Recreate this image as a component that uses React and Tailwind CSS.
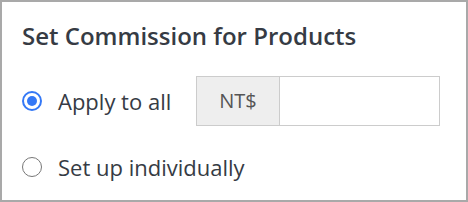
export default function App() {
  return (
    <div
      className="w-[468px] h-[202px] border-2 border-[#a9a9a9] bg-white text-[#363b44]"
      style={{ fontFamily: '"Open Sans", sans-serif' }}
    >
      <div className="pl-5 pt-[18px]">
        <h1 className="text-[24px] leading-[32px] font-semibold">Set Commission for Products</h1>

        <div className="mt-[24px] flex items-center h-[50px]">
          <label className="flex items-center w-[174px] shrink-0">
            <span className="w-5 h-5 rounded-full border-2 border-[#3478f6] flex items-center justify-center">
              <span className="w-[10px] h-[10px] rounded-full bg-[#3478f6]" />
            </span>
            <span className="ml-4 text-[22px]">Apply to all</span>
          </label>
          <div className="flex h-[50px] w-[244px] border border-[#cccccc]">
            <span className="w-[83px] shrink-0 bg-[#eeeeee] border-r border-[#cccccc] flex items-center justify-center text-[20px] text-[#555]">
              NT$
            </span>
            <input type="text" className="w-0 min-w-0 flex-1 px-3 outline-none bg-white" />
          </div>
        </div>

        <label className="mt-[25px] flex items-center h-[32px]">
          <span className="w-5 h-5 rounded-full border-[1.5px] border-[#777]" />
          <span className="ml-4 text-[22px]">Set up individually</span>
        </label>
      </div>
    </div>
  );
}
